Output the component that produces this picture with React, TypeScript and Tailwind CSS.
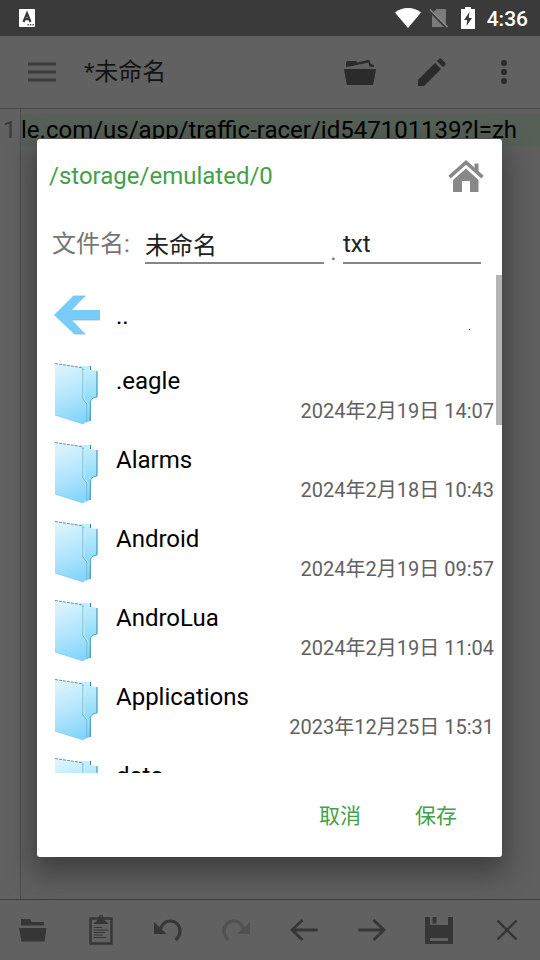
import React, { useState } from "react";

type IconProps = { className?: string };

type Entry = { name: string; date?: string };

const entries: Entry[] = [
  { name: ".eagle", date: "2024年2月19日 14:07" },
  { name: "Alarms", date: "2024年2月18日 10:43" },
  { name: "Android", date: "2024年2月19日 09:57" },
  { name: "AndroLua", date: "2024年2月19日 11:04" },
  { name: "Applications", date: "2023年12月25日 15:31" },
  { name: "data" },
];

function StatusBar() {
  return (
    <header className="flex h-9 shrink-0 items-center bg-[#3a3a3a] pl-[19px] pr-3 text-white">
      <svg className="h-[18px] w-4" viewBox="0 0 16 18" aria-hidden="true">
        <rect width="16" height="18" rx="1" fill="#fff" />
        <path d="M4.500 13 8 4.500 11.500 13M5.800 10.200h4.400" fill="none" stroke="#3a3a3a" strokeWidth="2.200" />
        <path d="M8.500 15.800h1.300M11 15.800h1.300M13.500 15.800h1.300" stroke="#3a3a3a" strokeWidth="1.400" />
      </svg>
      <div className="ml-auto flex items-center">
        <svg className="h-5 w-[26px]" viewBox="0 0 26 20" fill="#fff" aria-hidden="true">
          <path d="M13 20 0 4.500C3.500 1.500 8 0 13 0s9.500 1.500 13 4.500z" />
        </svg>
        <svg className="ml-2 h-5 w-5" viewBox="0 0 20 20" aria-hidden="true">
          <path d="M7.500 1H17v17L5 5.500V3.500zM3 7l12 12H3z" fill="#7b7b7b" />
          <path d="M1 1.500 18.500 19" stroke="#8a8a8a" strokeWidth="1.600" />
        </svg>
        <svg className="ml-3 h-[22px] w-[14px]" viewBox="0 0 14 22" aria-hidden="true">
          <path d="M4 0h6v2h4v20H0V2h4z" fill="#fff" />
          <path d="M8.500 5 3 13h3.200L5.500 19 11 11H7.800z" fill="#3a3a3a" />
        </svg>
        <span className="ml-3 pt-px text-[21px] font-medium leading-6">4:36</span>
      </div>
    </header>
  );
}

function OpenFolderIcon({ className }: IconProps) {
  return (
    <svg className={className} viewBox="0 0 32 26" fill="currentColor" aria-hidden="true">
      <path d="M0 10h32l-2.500 14.500q-.3 1.500-1.500 1.500H4q-1.200 0-1.500-1.500z" />
      <path d="M2 8V3.500Q2 2 3.500 2H12l1.500 1.500L25 .8l2 4.200 3 1v2h-4.500L24.500 3.500 7 7.200z" />
    </svg>
  );
}

function ClosedFolderIcon() {
  return (
    <svg className="h-6 w-7" viewBox="0 0 28 24" fill="currentColor" aria-hidden="true">
      <path d="M2 7.500V1h9l1.500 3H25v3.500zM0 10h27.500L25.500 23.500h-23z" />
    </svg>
  );
}

function ClipboardIcon() {
  return (
    <svg className="h-[30px] w-6" viewBox="0 0 24 30" fill="none" stroke="currentColor" aria-hidden="true">
      <path d="M1.500 3.500h21v25h-21z" strokeWidth="2.400" />
      <path d="M5 9V8l5-4h4l5 4v1z" fill="currentColor" stroke="none" />
      <circle cx="12" cy="2.500" r="1.800" strokeWidth="1.200" />
      <path d="M5 12.500h8M5 15h14M5 17.500h11M5 20h9M5 22.500h12" strokeWidth="1" />
    </svg>
  );
}

function UndoIcon({ className }: IconProps) {
  return (
    <svg className={className} viewBox="0 0 28 22" aria-hidden="true">
      <path d="M0 3v12h12.500L8.500 11z" fill="currentColor" />
      <path d="M6.500 9.500C8.500 5 11.500 2 16 2c6 0 10 4.500 10 10 0 4-2 7-4.500 9" fill="none" stroke="currentColor" strokeWidth="3.200" />
    </svg>
  );
}

function ArrowIcon({ className }: IconProps) {
  return (
    <svg className={className} viewBox="0 0 28 22" fill="none" stroke="currentColor" strokeWidth="2.800" aria-hidden="true">
      <path d="M27.500 11H2.500M12.500 1 2 11l10.500 10" />
    </svg>
  );
}

function SaveIcon() {
  return (
    <svg className="h-7 w-7" viewBox="0 0 28 28" aria-hidden="true">
      <path fillRule="evenodd" fill="currentColor" d="M0 1h5v8h18V1h5v27H0zM7.500 1h4v6.500h-4zM5 22v3h18v-3z" />
    </svg>
  );
}

function BackArrowIcon() {
  return (
    <svg className="h-10 w-[46px]" viewBox="0 0 46 40" aria-hidden="true">
      <path d="M0 20 19 1h12.500L18 15h28v10H18l13.500 14H20z" fill="#78cdf8" />
      <path d="M19 1h12.500M18 25h28V15M31.500 39H20" fill="none" stroke="#8db5d4" strokeWidth=".8" />
    </svg>
  );
}

function FolderIcon() {
  return (
    <svg className="h-16 w-[46px]" viewBox="0 0 46 64" aria-hidden="true">
      <defs>
        <linearGradient id="folder-front" x1=".3" y1="0" x2=".5" y2="1">
          <stop offset="0" stopColor="#dcf4fe" />
          <stop offset=".55" stopColor="#b2e5fd" />
          <stop offset="1" stopColor="#83d6fb" />
        </linearGradient>
        <linearGradient id="folder-back" x1="0" y1="0" x2="0" y2="1">
          <stop offset="0" stopColor="#c6effc" />
          <stop offset=".6" stopColor="#8fdcfa" />
          <stop offset="1" stopColor="#46b0de" />
        </linearGradient>
      </defs>
      <path d="M26 4h11v4l6 1v26l-4 1-3 3v20l-7 2z" fill="url(#folder-back)" />
      <path d="M36.500 4v4M43 9v26" fill="none" stroke="#2d87aa" strokeWidth="1" />
      <path d="M43 35l-4 1-2.500 3v20" fill="none" stroke="#3f9fc6" strokeWidth=".9" />
      <path d="M1 2l28 4v31l4 5v17l-4 3L1 53z" fill="url(#folder-front)" />
      <path d="M1 1.500l26 4q2 .5 2 2" fill="none" stroke="#4b8799" strokeWidth=".9" strokeDasharray="3 1" />
      <path d="M29 7v30l4 5v17" fill="none" stroke="#4fa3c4" strokeWidth=".8" />
      <path d="M30 8v29l4 5v17" fill="none" stroke="#dff6ff" strokeWidth=".8" />
      <path d="M1 53l28 9 4-3" fill="none" stroke="#7fc9e8" strokeWidth=".7" />
    </svg>
  );
}

function AppBar() {
  return (
    <div className="flex h-[73px] shrink-0 items-center border-b border-[#484848] bg-[#616161] pl-7 pr-[33px] text-[#2b2b2b]">
      <button aria-label="Menu" className="text-[#3b3b3b]">
        <svg className="h-5 w-7" viewBox="0 0 28 20" stroke="currentColor" strokeWidth="3" aria-hidden="true">
          <path d="M0 2h28M0 10h28M0 18h28" />
        </svg>
      </button>
      <h1 className="ml-7 text-2xl leading-8 text-[#141414]">*未命名</h1>
      <button aria-label="Open" className="ml-auto">
        <OpenFolderIcon className="h-[26px] w-8" />
      </button>
      <button aria-label="Edit" className="ml-[42px]">
        <svg className="h-7 w-7" viewBox="0 0 28 28" fill="currentColor" aria-hidden="true">
          <path d="M0 28v-6L17 5l6 6L6 28zM19 3l2.300-2.300q1-1 2 0l4 4q1 1 0 2L25 9z" />
        </svg>
      </button>
      <button aria-label="More" className="ml-[55px]">
        <svg className="h-6 w-[6px]" viewBox="0 0 6 24" fill="currentColor" aria-hidden="true">
          <circle cx="3" cy="3" r="3" />
          <circle cx="3" cy="12" r="3" />
          <circle cx="3" cy="21" r="3" />
        </svg>
      </button>
    </div>
  );
}

function Editor() {
  return (
    <main className="flex min-h-0 flex-1 overflow-hidden bg-[#5f5f5f] text-2xl leading-8">
      <div className="w-[21px] shrink-0 border-r border-[#4c4c4c] bg-[#616161] pl-[3px] pt-[5px] text-[#3a3a3a]">1</div>
      <div className="min-w-0 flex-1 pt-[5px]">
        <div className="h-8 whitespace-nowrap bg-[#566057] text-black">
          le.com/us/app/traffic-racer/id547101139?l=zh
        </div>
      </div>
    </main>
  );
}

function BottomBar() {
  return (
    <nav className="flex h-[61px] shrink-0 items-center justify-between border-t border-[#404040] bg-[#616161] px-[19px] text-[#363636]">
      <button aria-label="Open" className="flex w-7 justify-center"><ClosedFolderIcon /></button>
      <button aria-label="Clipboard" className="flex w-7 justify-center"><ClipboardIcon /></button>
      <button aria-label="Undo"><UndoIcon className="h-[22px] w-7" /></button>
      <button aria-label="Redo" className="text-[#515151]"><UndoIcon className="h-[22px] w-7 -scale-x-100" /></button>
      <button aria-label="Left"><ArrowIcon className="h-[22px] w-7" /></button>
      <button aria-label="Right"><ArrowIcon className="h-[22px] w-7 -scale-x-100" /></button>
      <button aria-label="Save"><SaveIcon /></button>
      <button aria-label="Close" className="flex w-7 justify-center">
        <svg className="h-5 w-5" viewBox="0 0 20 20" stroke="currentColor" strokeWidth="2.400" aria-hidden="true">
          <path d="m.5.5 19 19M19.500.5l-19 19" />
        </svg>
      </button>
    </nav>
  );
}

function SaveDialog() {
  const [name, setName] = useState("未命名");
  const [ext, setExt] = useState("txt");
  return (
    <section role="dialog" aria-label="Save" className="w-full rounded-[3px] bg-white shadow-[0_12px_28px_4px_rgba(0,0,0,0.35)]">
      <div className="flex h-[72px] items-center justify-between pl-3 pr-[18px] pt-px">
        <span className="text-2xl leading-8 text-[#43a047]">/storage/emulated/0</span>
        <button aria-label="Home" className="text-[#888888]">
          <svg className="h-8 w-9" viewBox="0 0 36 32" fill="currentColor" aria-hidden="true">
            <path d="M18 8.500 30.500 20v12H22V21h-8v11H5V20z" />
            <path d="m1.500 17.200L18 2.500l16.500 14.700" fill="none" stroke="currentColor" strokeWidth="3.600" />
            <path d="M26.500 3.500h4V14l-4-3.500z" />
          </svg>
        </button>
      </div>
      <div className="flex h-16 items-start pl-[15px] pr-[21px] pt-[13px] text-2xl leading-8 text-[#757575]">
        <label htmlFor="file-name" className="w-[93px] shrink-0 pt-1">文件名:</label>
        <input
          id="file-name"
          value={name}
          onChange={(e) => setName(e.target.value)}
          className="h-10 min-w-0 flex-[179] border-b-2 border-[#858585] text-[#212121] outline-none"
        />
        <span className="w-[19px] shrink-0 pt-3 text-center">.</span>
        <input
          aria-label="Extension"
          value={ext}
          onChange={(e) => setExt(e.target.value)}
          className="h-10 min-w-0 flex-[138] border-b-2 border-[#858585] pt-px text-[#212121] outline-none"
        />
      </div>
      <div className="relative h-[498px] overflow-hidden">
        <ul>
          <li className="flex h-[79px] items-center pl-[17px] text-2xl leading-8 text-black">
            <BackArrowIcon />
            <span className="ml-4 pt-0.5">..</span>
            <i className="ml-auto mr-8 mt-[30px] h-px w-px bg-[#5b2a70]" />
          </li>
          {entries.map((entry) => (
            <li key={entry.name} className="flex h-[79px] items-center pl-[17px] pr-2">
              <FolderIcon />
              <div className="ml-4 flex min-w-0 flex-1 flex-col self-start pt-[11px]">
                <span className="text-2xl leading-8 text-black">{entry.name}</span>
                {entry.date && (
                  <time className="self-end text-xl leading-7 text-[#616161]">{entry.date}</time>
                )}
              </div>
            </li>
          ))}
        </ul>
        <div className="absolute right-0 top-0 h-[150px] w-[6px] bg-[#b5b5b5]" />
      </div>
      <div className="flex h-[84px] items-center justify-end gap-[54px] pr-[45px] pt-0.5 text-[21px] leading-8 text-[#43a047]">
        <button>取消</button>
        <button>保存</button>
      </div>
    </section>
  );
}

export default function App() {
  return (
    <div className="relative flex min-h-screen flex-col overflow-hidden font-[Roboto,'Noto_Sans_CJK_SC',sans-serif]">
      <StatusBar />
      <AppBar />
      <Editor />
      <BottomBar />
      <div className="absolute inset-x-0 bottom-0 top-9 flex items-center pl-[37px] pr-[38px]">
        <SaveDialog />
      </div>
    </div>
  );
}
